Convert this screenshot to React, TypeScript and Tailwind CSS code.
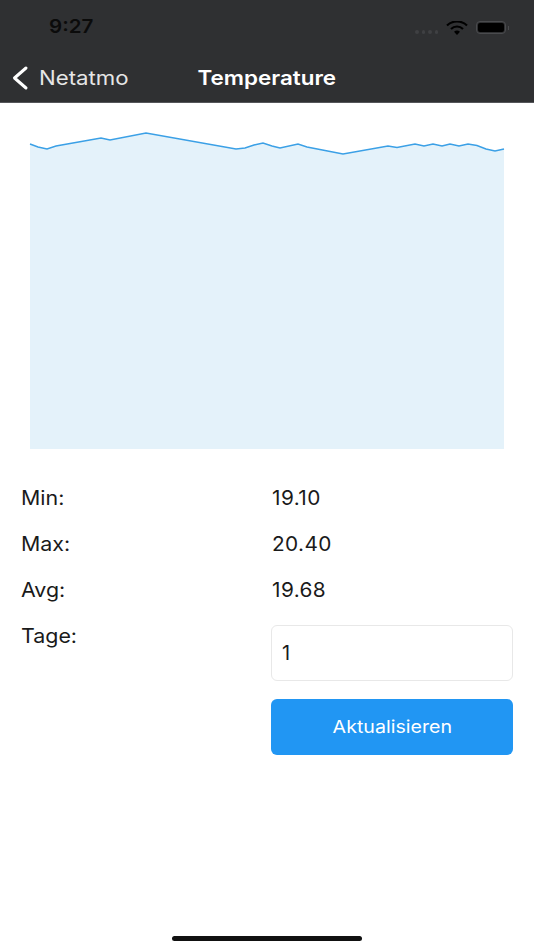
import React from 'react';

const points: [number, number][] = [
  [0, 16], [8, 19], [17, 21], [26, 18], [71, 10], [80, 12], [116, 5], [206, 21], [215, 20], [224, 17],
  [233, 15], [242, 18], [250, 20], [268, 16], [277, 19], [313, 26], [358, 18], [367, 19.5], [385, 16],
  [394, 18], [403, 16], [412, 18], [420, 16], [429, 18], [438, 16], [447, 17.5], [456, 21], [465, 23], [474, 21],
];

const line = points.map(([x, y]) => `${x},${y}`).join(' ');

const StatRow = ({ label, value }: { label: string; value: string }) => (
  <div className="flex h-[46px] items-center">
    <div className="w-[251px]">
      <span className="inline-block origin-left scale-x-[1.07]">{label}</span>
    </div>
    <div>
      <span className="inline-block origin-left scale-x-[1.04] tracking-[0.4px]">{value}</span>
    </div>
  </div>
);

export default function App() {
  return (
    <div className="flex h-[950px] w-[534px] flex-col overflow-hidden bg-white font-['Inter',sans-serif] text-[20px] text-[#1a1a1a]">
      {/* Status + nav bar */}
      <div className="h-[103px] shrink-0 border-b border-[#55565a] bg-[#2f3032]">
        <div className="flex h-[55px] items-center justify-between pl-[49px] pr-[25px]">
          <span className="inline-block origin-left scale-x-[1.08] text-[19px] font-semibold text-[#0b0b0b]">9:27</span>
          <div className="flex items-center gap-[8px]">
            <div className="mt-[9px] flex gap-[3px]">
              <span className="h-[3.5px] w-[3.5px] rounded-full bg-[#3f4043]" />
              <span className="h-[3.5px] w-[3.5px] rounded-full bg-[#3f4043]" />
              <span className="h-[3.5px] w-[3.5px] rounded-full bg-[#3f4043]" />
              <span className="h-[3.5px] w-[3.5px] rounded-full bg-[#3f4043]" />
            </div>
            <svg width="22" height="14" viewBox="0 0 22 14">
              <path d="M1 4.5 A14.5 14.5 0 0 1 21 4.5" fill="none" stroke="#000" strokeWidth="2.2" />
              <path d="M5 8 A8.5 8.5 0 0 1 17 8" fill="none" stroke="#000" strokeWidth="2.2" />
              <path d="M8 10.8 L11 14 L14 10.8 A4.5 4.5 0 0 0 8 10.8 Z" fill="#000" />
            </svg>
            <div className="flex items-center">
              <div className="flex h-[13px] w-[30px] items-center justify-center rounded-[4px] border border-[#4a4b4e]">
                <div className="h-[9px] w-[26px] rounded-[2px] bg-black" />
              </div>
              <div className="ml-[2px] h-[4px] w-[1px] bg-[#4a4b4e]" />
            </div>
          </div>
        </div>
        <div className="relative flex h-[47px] items-center pb-[2px]">
          <svg width="18" height="26" viewBox="0 0 18 26" className="ml-[11px]">
            <path d="M15 3 L3.5 13 L15 23" fill="none" stroke="#fff" strokeWidth="3" strokeLinecap="round" strokeLinejoin="round" />
          </svg>
          <span className="ml-[10px] inline-block origin-left scale-x-[1.11] text-[#e6e6e6]">Netatmo</span>
          <span className="absolute left-0 right-0 text-center">
            <span className="inline-block scale-x-[1.12] font-semibold text-white">Temperature</span>
          </span>
        </div>
      </div>

      {/* Chart */}
      <div className="pl-[30px] pt-[25px]">
        <svg width="474" height="321" viewBox="0 0 474 321" className="block overflow-visible">
          <polygon points={`0,321 ${line} 474,321`} fill="#e4f2fa" />
          <polyline points={line} fill="none" stroke="#3ba0e6" strokeWidth="1.5" />
        </svg>
      </div>

      {/* Stats */}
      <div className="pl-[21px] pt-[26px]">
        <StatRow label="Min:" value="19.10" />
        <StatRow label="Max:" value="20.40" />
        <StatRow label="Avg:" value="19.68" />
        <div className="mt-[12px] flex">
          <div className="w-[250px] leading-[22px]">
            <span className="inline-block origin-left scale-x-[1.07]">Tage:</span>
          </div>
          <div className="flex w-[242px] flex-col gap-[18px]">
            <div className="flex h-[56px] items-center rounded-[6px] border border-[#e8e8e8] pl-[10px]">1</div>
            <button className="h-[56px] rounded-[6px] bg-[#2196f3] text-[17.5px] text-white">
              <span className="inline-block scale-x-[1.12]">Aktualisieren</span>
            </button>
          </div>
        </div>
      </div>

      {/* Home indicator */}
      <div className="mt-auto flex justify-center pb-[9px]">
        <div className="h-[5px] w-[190px] rounded-full bg-[#111]" />
      </div>
    </div>
  );
}
